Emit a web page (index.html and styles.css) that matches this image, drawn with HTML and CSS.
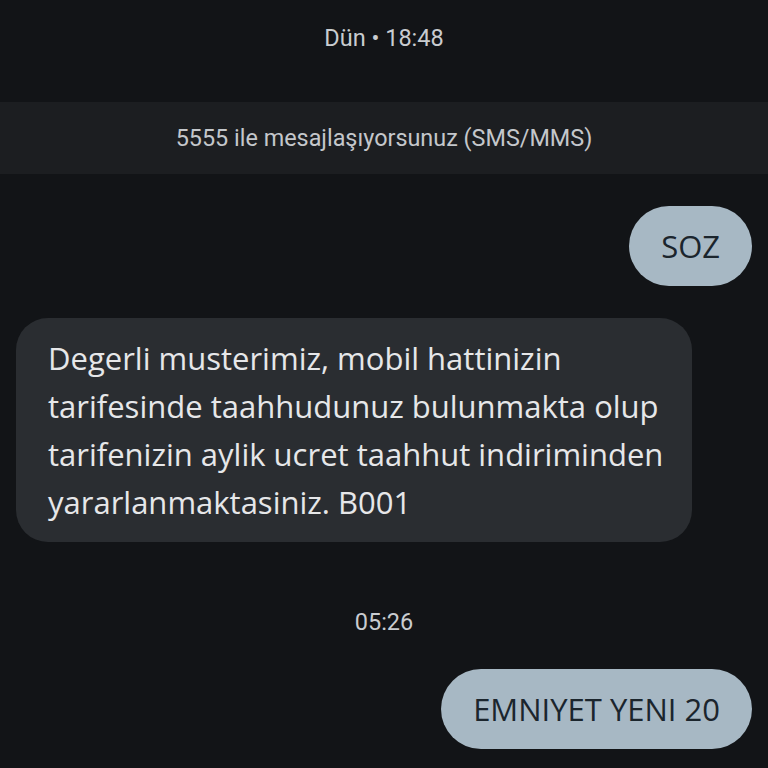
FILE: index.html
```html
<!DOCTYPE html>
<html lang="tr">
<head>
<meta charset="utf-8">
<link rel="stylesheet" href="styles.css">
</head>
<body>
<div class="chat">
  <div class="stamp stamp-top">Dün • 18:48</div>
  <div class="banner">5555 ile mesajlaşıyorsunuz (SMS/MMS)</div>
  <div class="row out first"><div class="bubble sent">SOZ</div></div>
  <div class="row in"><div class="bubble recv">Degerli musterimiz, mobil hattinizin tarifesinde taahhudunuz bulunmakta olup tarifenizin aylik ucret taahhut indiriminden yararlanmaktasiniz. B001</div></div>
  <div class="stamp stamp-mid">05:26</div>
  <div class="row out last"><div class="bubble sent">EMNIYET YENI 20</div></div>
</div>
</body>
</html>
```
FILE: styles.css
```css
html, body {
  margin: 0;
  padding: 0;
  background: #121417;
  height: 768px;
  overflow: hidden;
}
.chat {
  display: flex;
  flex-direction: column;
  font-family: "Open Sans", Roboto, sans-serif;
}
.stamp {
  font-family: Roboto, "Noto Sans", sans-serif;
  color: #c9ccd0;
  font-size: 23.5px;
  text-align: center;
  line-height: 26px;
}
.stamp-top {
  margin-top: 25px;
}
.banner {
  margin-top: 51px;
  background: #1c1e21;
  height: 72px;
  display: flex;
  align-items: center;
  justify-content: center;
  font-family: Roboto, "Noto Sans", sans-serif;
  font-size: 23.4px;
  color: #c4c7cb;
}
.row {
  display: flex;
  padding: 0 16px;
}
.row.out {
  justify-content: flex-end;
}
.bubble {
  font-size: 31px;
  line-height: 48px;
}
.sent {
  background: #a7b8c4;
  color: #1b252d;
  border-radius: 40px;
  height: 80px;
  display: flex;
  align-items: center;
  padding: 0 32px;
  box-sizing: border-box;
}
.row.first {
  margin-top: 32px;
}
.row.in {
  margin-top: 32px;
}
.recv {
  background: #2a2d31;
  color: #e6e7e9;
  border-radius: 32px;
  padding: 16px 18px 16px 32px;
  width: 676px;
  box-sizing: border-box;
}
.stamp-mid {
  margin-top: 67px;
}
.row.last {
  margin-top: 34px;
}
```
